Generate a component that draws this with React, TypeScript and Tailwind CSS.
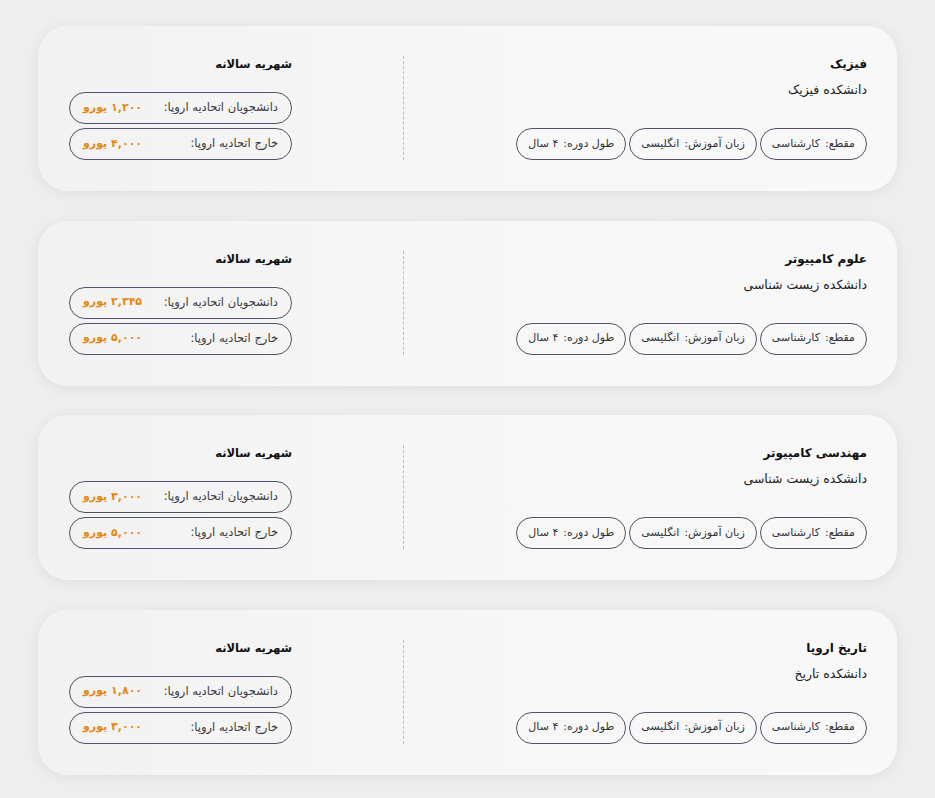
import React from 'react';

interface Program {
  title: string;
  faculty: string;
  euFee: string;
  nonEuFee: string;
}

const programs: Program[] = [
  { title: 'فیزیک', faculty: 'دانشکده فیزیک', euFee: '۱,۲۰۰', nonEuFee: '۴,۰۰۰' },
  { title: 'علوم کامپیوتر', faculty: 'دانشکده زیست شناسی', euFee: '۲,۳۴۵', nonEuFee: '۵,۰۰۰' },
  { title: 'مهندسی کامپیوتر', faculty: 'دانشکده زیست شناسی', euFee: '۳,۰۰۰', nonEuFee: '۵,۰۰۰' },
  { title: 'تاریخ اروپا', faculty: 'دانشکده تاریخ', euFee: '۱,۸۰۰', nonEuFee: '۳,۰۰۰' },
];

const tags = [
  { label: 'مقطع:', value: 'کارشناسی' },
  { label: 'زبان آموزش:', value: 'انگلیسی' },
  { label: 'طول دوره:', value: '۴ سال' },
];

const FeeRow: React.FC<{ label: string; amount: string }> = ({ label, amount }) => (
  <div className="flex h-[32px] items-center justify-between rounded-full border border-[#4b5563] px-[13px]">
    <span className="text-[11.5px] text-[#3a3a3a]">{label}</span>
    <span className="text-[11px] font-bold text-[#e5870f]">{amount} یورو</span>
  </div>
);

const ProgramCard: React.FC<{ program: Program }> = ({ program }) => (
  <div className="flex h-[165px] rounded-[30px] bg-gradient-to-l from-[#f8f8f9] via-[#f7f7f8] to-[#f2f2f2] px-[30px] pt-[30px] shadow-[0_2px_14px_rgba(0,0,0,0.07)]">
    {/* program info */}
    <div className="flex h-[104px] w-[463px] flex-col">
      <div className="text-[12px] font-bold leading-[16px] text-[#111]">{program.title}</div>
      <div className="mt-[10px] text-[12.5px] leading-[16px] text-[#222]">{program.faculty}</div>
      <div className="mt-auto flex gap-[3px]">
        {tags.map(tag => (
          <div
            key={tag.label}
            className="flex h-[32px] items-center gap-[5px] rounded-full border border-[#4b5563] px-[11px] text-[11px] text-[#333]"
          >
            <span>{tag.label}</span>
            <span>{tag.value}</span>
          </div>
        ))}
      </div>
    </div>

    <div className="h-[104px] w-0 border-l border-dashed border-[#bdbdbd]" />

    {/* tuition */}
    <div className="mr-[111px] flex h-[104px] w-[223px] flex-col">
      <div className="text-[11.5px] font-bold leading-[16px] text-[#111]">شهریه سالانه</div>
      <div className="mt-auto flex flex-col gap-[4px]">
        <FeeRow label="دانشجویان اتحادیه اروپا:" amount={program.euFee} />
        <FeeRow label="خارج اتحادیه اروپا:" amount={program.nonEuFee} />
      </div>
    </div>
  </div>
);

export default function App() {
  return (
    <div
      dir="rtl"
      className="min-h-[798px] bg-[#eeeeee] px-[38px] pt-[26px] pb-[24px]"
      style={{ fontFamily: '"DejaVu Sans", sans-serif' }}
    >
      <div className="flex flex-col gap-[29.5px]">
        {programs.map(p => (
          <ProgramCard key={p.title} program={p} />
        ))}
      </div>
    </div>
  );
}
